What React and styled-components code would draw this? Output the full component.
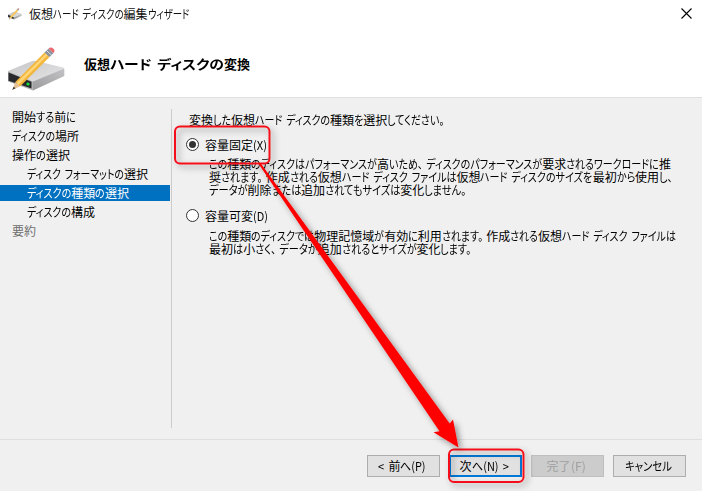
import React, { useLayoutEffect, useRef } from "react";
import styled, { createGlobalStyle, css } from "styled-components";

const GlobalStyle = createGlobalStyle`
  body { margin: 0; background: #f0f0f0; overflow: hidden; }
`;

const Window = styled.div`
  position: relative;
  display: flex;
  flex-direction: column;
  width: 702px;
  height: 491px;
  box-sizing: border-box;
  background: #f0f0f0;
  color: #000;
  font: 12px/13px "Noto Sans CJK JP", sans-serif;
`;

const TitleBar = styled.header`
  display: flex;
  align-items: center;
  height: 27px;
  padding: 0 10px 0 8px;
  background: #fff;
  color: #111;
`;

const TitleText = styled.div`
  flex: 1;
  padding-left: 7px;
`;

const CloseIcon = styled.svg`
  width: 11px;
  height: 11px;
  flex: none;
`;

const Banner = styled.div`
  display: flex;
  align-items: center;
  height: 71px;
  padding-left: 8px;
  box-sizing: border-box;
  background: #fff;
  border-bottom: 1px solid #dfdfdf;
`;

const BannerIcon = styled.div`
  display: flex;
  margin-top: 15px;
`;

const Heading = styled.h1`
  margin: 3px 0 0 18px;
  font-size: 13px;
  line-height: 18px;
  font-weight: 700;
`;

const Body = styled.div`
  display: flex;
  height: 342px;
  box-sizing: border-box;
  border-bottom: 1px solid #dfdfdf;
`;

const Steps = styled.nav`
  display: flex;
  flex-direction: column;
  gap: 3px;
  width: 170px;
  padding-top: 11px;
`;

const Step = styled.div`
  height: 16px;
  line-height: 16px;
  padding-left: ${(p) => (p.$nested ? 27 : 12)}px;
  color: ${(p) => (p.$active ? "#fff" : p.$disabled ? "#6d6d6d" : "#000")};
  background: ${(p) => (p.$active ? "#0070c0" : "transparent")};
`;

const Divider = styled.div`
  width: 1px;
  height: 319px;
  margin: 11px 0 0 1px;
  background: #ccc;
`;

const Content = styled.main`
  padding: 15px 0 0 14px;
`;

const Prompt = styled.div`
  padding-left: 3px;
`;

const Option = styled.label`
  display: flex;
  align-items: center;
  height: 15px;
  margin-top: ${(p) => p.$gap}px;
`;

const Radio = styled.span`
  display: grid;
  place-items: center;
  width: 13px;
  height: 13px;
  box-sizing: border-box;
  margin-right: 6px;
  border: 1px solid #333;
  border-radius: 50%;
  background: #fff;
  &::after {
    content: "";
    width: 7px;
    height: 7px;
    border-radius: 50%;
    background: ${(p) => (p.$checked ? "#333" : "#fff")};
  }
`;

const Description = styled.div`
  padding: ${(p) => p.$top}px 0 0 23px;
`;

const Footer = styled.footer`
  display: flex;
  gap: 9px;
  justify-content: flex-end;
  padding: 15px 16px 0 0;
`;

const Button = styled.button`
  display: flex;
  align-items: center;
  justify-content: center;
  width: 73px;
  height: 22px;
  padding: 0 3px 1px 0;
  font: inherit;
  color: #000;
  background: #e1e1e1;
  border: 1px solid #adadad;
  ${(p) => p.$primary && css`border: 2px solid #0078d7;`}
  &:disabled {
    color: #a0a0a0;
    background: #ccc;
    border-color: #bfbfbf;
  }
`;

const Line = styled.span`
  display: block;
  width: max-content;
  white-space: pre;
`;

const KanaRun = styled.span`
  display: inline-block;
  font-feature-settings: "palt";
  vertical-align: top;
`;

const KanaGlyphs = styled.span`
  display: inline-block;
  transform-origin: 0 50%;
  word-spacing: 2px;
`;

const PauseMark = styled.span`
  padding-right: 4px;
`;

const Annotations = styled.svg`
  position: absolute;
  inset: 0;
  width: 702px;
  height: 491px;
  pointer-events: none;
`;

const Callout = styled.rect`
  fill: none;
  stroke: #f5101a;
  stroke-width: 2;
`;

/* Sets one line of Japanese with full-width kanji and condensed kana. */
function JpLine({ text, width }) {
  const ref = useRef(null);
  const runs = text.match(/[一-龠]+|[^一-龠]+/g);
  useLayoutEffect(() => {
    const glyphs = [...ref.current.querySelectorAll("[data-kana]")];
    if (!glyphs.length) return;
    glyphs.forEach((g) => {
      g.style.transform = "";
      g.parentElement.style.width = "";
    });
    const widths = glyphs.map((g) => g.getBoundingClientRect().width);
    const kana = widths.reduce((a, b) => a + b, 0);
    const total = ref.current.getBoundingClientRect().width;
    const scale = (width - (total - kana)) / kana;
    glyphs.forEach((g, i) => {
      g.parentElement.style.width = `${widths[i] * scale}px`;
      g.style.transform = `scaleX(${scale})`;
    });
  }, [text, width]);
  return (
    <Line ref={ref}>
      {runs.map((run, i) =>
        /[一-龠]/.test(run) ? (
          run
        ) : (
          <KanaRun key={i}>
            <KanaGlyphs data-kana>
              {run.split(/([、。])/).map((part, j) =>
                /[、。]/.test(part) ? <PauseMark key={j}>{part}</PauseMark> : part
              )}
            </KanaGlyphs>
          </KanaRun>
        )
      )}
    </Line>
  );
}

function DiskIcon({ width, height }) {
  return (
    <svg width={width} height={height} viewBox="0 0 58 45" preserveAspectRatio="none">
      <defs>
        <linearGradient id="top" x1="0" y1="0" x2="1" y2="1">
          <stop offset="0" stopColor="#c6c6c8" />
          <stop offset="1" stopColor="#e6e6e7" />
        </linearGradient>
        <linearGradient id="side" x1="0" y1="1" x2="1" y2="0">
          <stop offset="0" stopColor="#9c9c9e" />
          <stop offset="1" stopColor="#c2c2c4" />
        </linearGradient>
      </defs>
      <path d="M0 24L23 14.500Q25 13.500 28 14L55 20.500Q57 21 55.500 22L25 35Z" fill="url(#top)" />
      <path d="M25 34.500L56.300 21.500V29L25 43.500Z" fill="url(#side)" />
      <path d="M0 24L25 34.500V43.500L0 34.500Z" fill="#b5b5b7" />
      <path d="M.5 25.500L23.500 34.800V41.500L.5 33.800Z" fill="#28292c" />
      <circle cx="20" cy="37" r="1.600" fill="#13e33a" />
      <path d="M7.300 35L36.500 5.500L41.500 10L12 39.500Z" fill="#f3b53b" />
      <path d="M8.500 36L37.800 6.700L39.600 8.300L10.300 38Z" fill="#ffd778" />
      <path d="M7.300 35L12 39.500L4.500 42.500Z" fill="#e5c096" />
      <path d="M5.600 39.700L7.600 41.300L4.200 43Z" fill="#3d3837" />
      <path d="M36.500 5.500L40.500 1.800L45.500 6L41.500 10Z" fill="#88909a" />
      <path d="M38.500 3.600L43.500 8" stroke="#d8dde2" strokeWidth="1" />
      <path d="M40.500 1.800Q42.500-.6 45.500 1.700Q47.500 3.700 45.500 6Z" fill="#ec6970" />
    </svg>
  );
}

const STEPS = [
  { text: "開始する前に", width: 64 },
  { text: "ディスクの場所", width: 67 },
  { text: "操作の選択", width: 58 },
  { text: "ディスク フォーマットの選択", width: 121, nested: true },
  { text: "ディスクの種類の選択", width: 102, nested: true, active: true },
  { text: "ディスクの構成", width: 68, nested: true },
  { text: "要約", width: 24, disabled: true },
];

const FIXED = [
  ["この種類のディスクはパフォーマンスが高いため、ディスクのパフォーマンスが要求されるワークロードに推", 462],
  ["奨されます。作成される仮想ハード ディスク ファイルは仮想ハード ディスクのサイズを最初から使用し、", 467],
  ["データが削除または追加されてもサイズは変化しません。", 261],
];

const DYNAMIC = [
  ["この種類のディスクでは物理記憶域が有効に利用されます。作成される仮想ハード ディスク ファイルは", 467],
  ["最初は小さく、データが追加されるとサイズが変化します。", 266],
];

export default function App() {
  return (
    <>
      <GlobalStyle />
      <Window>
        <TitleBar>
          <DiskIcon width={14} height={12} />
          <TitleText>
            <JpLine text="仮想ハード ディスクの編集ウィザード" width={160} />
          </TitleText>
          <CloseIcon viewBox="0 0 11 11">
            <path d="M.5 .5L10.500 10.500M10.500 .5L.5 10.500" stroke="#000" strokeWidth="1.1" />
          </CloseIcon>
        </TitleBar>
        <Banner>
          <BannerIcon>
            <DiskIcon width={58} height={45} />
          </BannerIcon>
          <Heading>
            <JpLine text="仮想ハード ディスクの変換" width={166} />
          </Heading>
        </Banner>
        <Body>
          <Steps>
            {STEPS.map((s) => (
              <Step key={s.text} $nested={s.nested} $active={s.active} $disabled={s.disabled}>
                <JpLine text={s.text} width={s.width} />
              </Step>
            ))}
          </Steps>
          <Divider />
          <Content>
            <Prompt>
              <JpLine text="変換した仮想ハード ディスクの種類を選択してください。" width={259} />
            </Prompt>
            <Option $gap={11}>
              <Radio $checked />
              <JpLine text="容量固定(X)" width={62} />
            </Option>
            <Description $top={5}>
              {FIXED.map(([text, width]) => (
                <JpLine key={text} text={text} width={width} />
              ))}
            </Description>
            <Option $gap={12}>
              <Radio />
              <JpLine text="容量可変(D)" width={63} />
            </Option>
            <Description $top={6}>
              {DYNAMIC.map(([text, width]) => (
                <JpLine key={text} text={text} width={width} />
              ))}
            </Description>
          </Content>
        </Body>
        <Footer>
          <Button><JpLine text="< 前へ(P)" width={48} /></Button>
          <Button $primary><JpLine text="次へ(N) >" width={49} /></Button>
          <Button disabled><JpLine text="完了(F)" width={39} /></Button>
          <Button><JpLine text="キャンセル" width={47} /></Button>
        </Footer>
        <Annotations viewBox="0 0 702 491">
          <defs>
            <filter id="shadow" x="-20%" y="-30%" width="150%" height="170%">
              <feDropShadow dx="3" dy="3" stdDeviation="3" floodColor="#000" floodOpacity="0.4" />
            </filter>
          </defs>
          <Callout x="175" y="126.500" width="94.500" height="37" rx="5" filter="url(#shadow)" />
          <Callout x="449" y="449.500" width="74.500" height="32.500" rx="5" filter="url(#shadow)" />
          <path
            d="M258 163L260.500 163L449.700 423.500L453 419.500L458.500 447.500L433.500 432.300L439.500 431.300Z"
            fill="#f00"
            filter="url(#shadow)"
          />
        </Annotations>
      </Window>
    </>
  );
}
